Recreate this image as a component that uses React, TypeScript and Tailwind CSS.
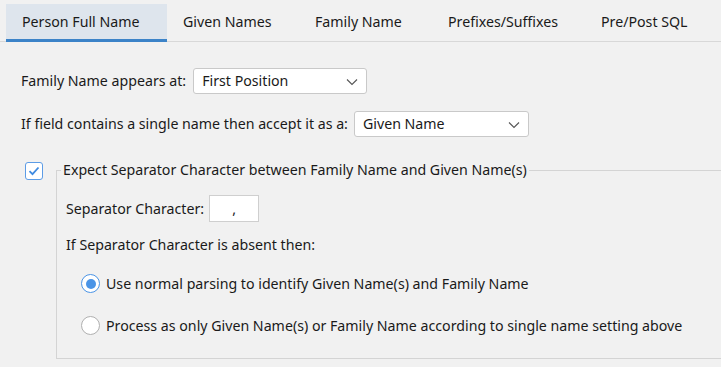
import React from "react";

const font = { fontFamily: '"Noto Sans", "Open Sans", sans-serif' };

function Chevron() {
  return (
    <svg width="12" height="8" viewBox="0 0 12 8" className="absolute right-[8px] top-[9px]">
      <path d="M1 1.5 L6 6.5 L11 1.5" fill="none" stroke="#555" strokeWidth="1.1" />
    </svg>
  );
}

function Select({ value, w }: { value: string; w: string }) {
  return (
    <div className={`relative h-[26px] ${w} rounded-[3px] border border-[#c9c9c9] bg-white pl-[8px] leading-[24px] text-[#1a1a1a]`}>
      {value}
      <Chevron />
    </div>
  );
}

function Radio({ checked }: { checked: boolean }) {
  return checked ? (
    <div className="flex h-[19px] w-[19px] items-center justify-center rounded-full border-[1.5px] border-[#4a94e6] bg-white">
      <div className="h-[10px] w-[10px] rounded-full bg-[#4a94e6]" />
    </div>
  ) : (
    <div className="h-[19px] w-[19px] rounded-full border-[1.5px] border-[#b0b0b0] bg-white" />
  );
}

export default function App() {
  const tabs = ["Given Names", "Family Name", "Prefixes/Suffixes", "Pre/Post SQL"];
  return (
    <div style={font} className="h-[367px] w-[721px] overflow-hidden bg-[#f1f1f1] text-[14.2px] text-[#1a1a1a]">
      <div className="flex h-[42px] items-end border-b border-[#d8d8d8] pl-[6px] pt-[4px]">
        <div className="mb-[-1px] flex h-[38px] w-[161px] flex-col bg-[#dee5ed]">
          <div className="flex flex-1 items-center pl-[16px]">Person Full Name</div>
          <div className="h-[3px] bg-[#3c83c8]" />
        </div>
        {tabs.map((t, i) => (
          <div
            key={t}
            className={`flex h-[38px] items-center ${["pl-[16px] w-[148px]", "w-[133px]", "w-[153px]", "w-[120px]"][i]}`}
          >
            {t}
          </div>
        ))}
      </div>

      <div className="flex items-center gap-[7px] pl-[21px] pt-[26px]">
        <span>Family Name appears at:</span>
        <Select value="First Position" w="w-[174px]" />
      </div>
      <div className="flex items-center gap-[6px] pl-[21px] pt-[17px]">
        <span>If field contains a single name then accept it as a:</span>
        <Select value="Given Name" w="w-[175px]" />
      </div>

      <div className="flex pl-[25px] pt-[25px]">
        <div className="flex h-[18px] w-[18px] items-center justify-center rounded-[3px] border-[1.5px] border-[#5c9ce6] bg-white">
          <svg width="12" height="10" viewBox="0 0 12 10">
            <path d="M1.5 5.2 L4.5 8.2 L10.5 1.5" fill="none" stroke="#3f8ae0" strokeWidth="1.8" />
          </svg>
        </div>
        <div className="relative ml-[13px] mt-[8px] h-[189px] flex-1 border-b border-l border-t border-[#d4d4d4]">
          <div className="absolute left-[4px] top-[-12px] bg-[#f1f1f1] px-[2px] leading-[22px]">
            Expect Separator Character between Family Name and Given Name(s)
          </div>
          <div className="flex items-center gap-[5px] pl-[9px] pt-[24px]">
            <span>Separator Character:</span>
            <div className="flex h-[27px] w-[50px] items-center justify-center border border-[#cfcfcf] bg-white">,</div>
          </div>
          <div className="pl-[9px] pt-[13px] leading-[20px]">If Separator Character is absent then:</div>
          <div className="flex items-center gap-[6px] pl-[24px] pt-[18px]">
            <Radio checked />
            <span>Use normal parsing to identify Given Name(s) and Family Name</span>
          </div>
          <div className="flex items-center gap-[6px] pl-[24px] pt-[21px]">
            <Radio checked={false} />
            <span>Process as only Given Name(s) or Family Name according to single name setting above</span>
          </div>
        </div>
      </div>
    </div>
  );
}
